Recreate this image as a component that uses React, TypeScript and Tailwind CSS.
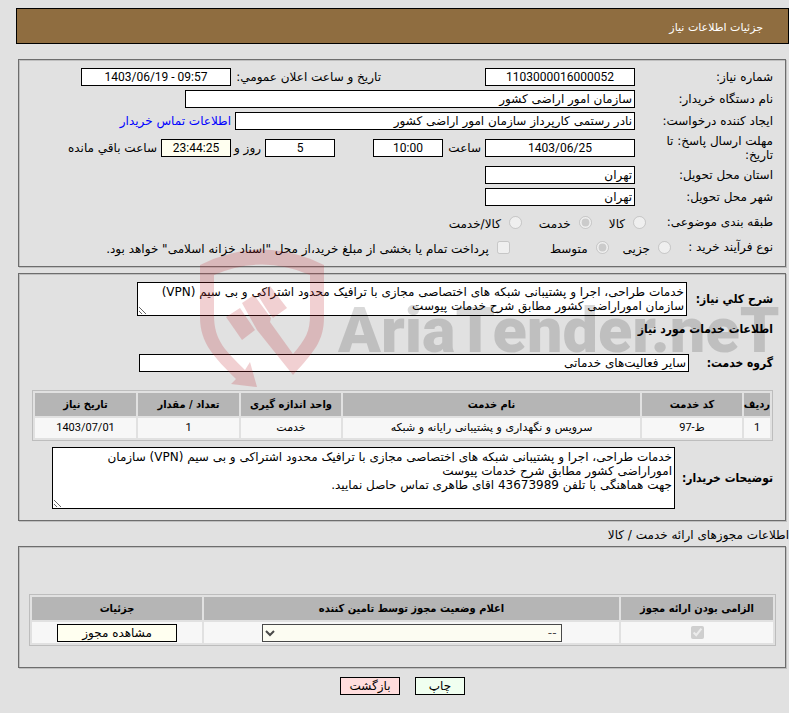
import type { ReactNode } from "react";
import clsx from "clsx";

const description =
  "خدمات طراحی، اجرا و پشتیبانی شبکه های اختصاصی مجازی با ترافیک محدود اشتراکی و بی سیم (VPN) سازمان اموراراضی کشور مطابق شرح خدمات پیوست";

const buyerNotes = `${description}\nجهت هماهنگی با تلفن 43673989 اقای طاهری تماس حاصل نمایید.`;

const services = [
  {
    row: "1",
    code: "ط-97",
    name: "سرویس و نگهداری و پشتیبانی رایانه و شبکه",
    unit: "خدمت",
    amount: "1",
    date: "1403/07/01",
  },
];

const bold = "font-['DejaVu_Sans_Condensed','DejaVu_Sans',sans-serif] font-bold";
const numeric = "font-[Roboto,'DejaVu_Sans',sans-serif] text-center";
const cell = "bg-[#f7f7f7] p-0 text-center";
const head = clsx("h-[23px] bg-[#b5b5b5] p-0 text-center", bold);
const label = "w-[138px] shrink-0";

function Panel({ className, children }: { className?: string; children: ReactNode }) {
  return (
    <section
      className={clsx(
        "ml-0.5 mr-[3px] border border-[#6d6d6d] shadow-[1px_1px_0_#bfbfbf,inset_1px_1px_0_#bfbfbf]",
        className
      )}
    >
      {children}
    </section>
  );
}

function Field({ id, value, className }: { id: string; value: string; className: string }) {
  return (
    <input
      id={id}
      type="text"
      readOnly
      defaultValue={value}
      className={clsx("h-[18px] shrink-0 border border-black px-0.5 leading-4", className)}
    />
  );
}

function Option({ name, label, checked }: { name: string; label: string; checked?: boolean }) {
  return (
    <label className="flex items-center gap-2">
      <input type="radio" name={name} disabled defaultChecked={checked} className="size-[13px]" />
      <span className="pt-1">{label}</span>
    </label>
  );
}

function Watermark() {
  return (
    <svg
      className="pointer-events-none absolute left-[200px] top-[249px]"
      width="589"
      height="140"
      viewBox="0 0 589 140"
      direction="ltr"
      aria-hidden="true"
    >
      <g fill="#be2832" fillOpacity="0.22">
        <path d="M0 16Q62 -15 124 16V68C124 92 114 103 93 126L57 81L42 54L54 46L71 69L70 73L93 105C106 90 110 82 110 66V26Q62 5 14 26V66C14 92 26 102 45 121L50 113L57 138L31 135L36 130C14 108 0 94 0 68Z" />
        <path d="M26 68L40 59L55 81L42 91Z" />
        <path d="M57 45L70 37L87 59L73 69L69 64Z" />
      </g>
      <text
        x="138"
        y="103"
        fontSize="63"
        fontWeight="900"
        fill="#000000"
        fillOpacity="0.15"
        className="font-[Roboto,sans-serif]"
      >
        AriaTender.neT
      </text>
    </svg>
  );
}

export default function App() {
  return (
    <div
      dir="rtl"
      className="relative min-h-screen bg-[#e1e1e1] pb-4 pl-4 pt-2 font-['DejaVu_Sans',sans-serif] text-[12px] leading-[14px] text-black"
    >
      <header className="flex h-9 items-center border border-black bg-[#8f6d40] pr-[25px] pt-1 text-[11px] text-white">
        <h1>جزئیات اطلاعات نیاز</h1>
      </header>

      <Panel className="mt-[15px] pb-2 pl-[13px] pr-3 pt-1.5">
        <div className="flex h-[22px] items-center">
          <label htmlFor="need-no" className={label}>شماره نیاز:</label>
          <Field id="need-no" value="1103000016000052" className={clsx("w-[150px] bg-white", numeric)} />
          <label htmlFor="announce" className="mr-[104px] w-[150px] shrink-0">تاريخ و ساعت اعلان عمومي:</label>
          <Field id="announce" value="1403/06/19 - 09:57" className={clsx("w-[150px] bg-white [direction:ltr]", numeric)} />
        </div>
        <div className="flex h-[22px] items-center">
          <label htmlFor="org" className={label}>نام دستگاه خریدار:</label>
          <Field id="org" value="سازمان امور اراضی کشور" className="w-[450px] bg-white" />
        </div>
        <div className="flex h-[22px] items-center">
          <label htmlFor="creator" className={label}>ایجاد کننده درخواست:</label>
          <Field id="creator" value="نادر رستمی کارپرداز سازمان امور اراضی کشور" className="w-[400px] bg-white" />
          <a href="#contact" className="mr-1 text-[#0000ff]">اطلاعات تماس خریدار</a>
        </div>
        <div className="flex h-8 items-center">
          <label htmlFor="deadline" className={clsx(label, "pl-5")}>مهلت ارسال پاسخ: تا تاریخ:</label>
          <Field id="deadline" value="1403/06/25" className={clsx("w-[150px] bg-white", numeric)} />
          <label htmlFor="hour" className="w-[42px] shrink-0 pr-1">ساعت</label>
          <Field id="hour" value="10:00" className={clsx("w-[70px] bg-white", numeric)} />
          <Field id="days" value="5" className={clsx("mr-[38px] w-[70px] bg-white", numeric)} />
          <label htmlFor="days" className="w-[34px] shrink-0 whitespace-nowrap pr-1">روز و</label>
          <Field id="left" value="23:44:25" className={clsx("w-[70px] bg-[#fffff0]", numeric)} />
          <label htmlFor="left" className="shrink-0 pr-1">ساعت باقي مانده</label>
        </div>
        <div className="flex h-[22px] items-center">
          <label htmlFor="province" className={label}>استان محل تحویل:</label>
          <Field id="province" value="تهران" className="w-[150px] bg-white" />
        </div>
        <div className="flex h-[22px] items-center">
          <label htmlFor="city" className={label}>شهر محل تحویل:</label>
          <Field id="city" value="تهران" className="w-[150px] bg-white" />
        </div>
        <div className="flex h-7 items-center" role="radiogroup" aria-label="طبقه بندی موضوعی">
          <span className="w-[127px] shrink-0">طبقه بندی موضوعی:</span>
          <div className="flex gap-[17px]">
            <Option name="subject" label="کالا" />
            <Option name="subject" label="خدمت" checked />
            <Option name="subject" label="کالا/خدمت" />
          </div>
        </div>
        <div className="flex h-[22px] items-center">
          <span className="w-[102px] shrink-0">نوع فرآیند خرید :</span>
          <div className="flex shrink-0 gap-[14px]" role="radiogroup" aria-label="نوع فرآیند خرید">
            <Option name="process" label="جزیی" />
            <Option name="process" label="متوسط" checked />
          </div>
          <label className="mr-10 flex shrink-0 items-center gap-2">
            <input type="checkbox" disabled className="size-[13px]" />
            <span className="pt-1">پرداخت تمام یا بخشی از مبلغ خرید،از محل "اسناد خزانه اسلامی" خواهد بود.</span>
          </label>
        </div>
      </Panel>

      <Panel className="mt-1.5 pb-[11px] pl-[13px] pr-3 pt-2">
        <div className="flex items-center">
          <label htmlFor="summary" className={clsx("w-[86px] shrink-0", bold)}>شرح کلي نیاز:</label>
          <textarea
            id="summary"
            readOnly
            defaultValue={description}
            className="h-[34px] w-[550px] border border-black bg-white px-0.5 py-0.5"
          />
        </div>
        <h2 className={clsx("mt-1.5", bold)}>اطلاعات خدمات مورد نیاز</h2>
        <div className="mt-[18px] flex items-center">
          <label htmlFor="group" className={clsx("w-[84px] shrink-0", bold)}>گروه خدمت:</label>
          <Field id="group" value="سایر فعالیت‌های خدماتی" className="w-[550px] bg-white" />
        </div>
        <table className="mt-[18px] w-full table-fixed border-separate border-spacing-0.5 border border-[#bdbdbd] text-[11px]">
          <colgroup>
            <col className="w-[26px]" />
            <col className="w-[100px]" />
            <col />
            <col className="w-[100px]" />
            <col className="w-[101px]" />
            <col className="w-[101px]" />
          </colgroup>
          <thead>
            <tr>
              <th className={clsx(head, "whitespace-nowrap")}>ردیف</th>
              <th className={head}>کد خدمت</th>
              <th className={head}>نام خدمت</th>
              <th className={head}>واحد اندازه گیری</th>
              <th className={head}>تعداد / مقدار</th>
              <th className={head}>تاریخ نیاز</th>
            </tr>
          </thead>
          <tbody>
            {services.map((s) => (
              <tr key={s.row}>
                <td className={clsx(cell, numeric, "h-5")}>{s.row}</td>
                <td className={clsx(cell, numeric)}>{s.code}</td>
                <td className={cell}>{s.name}</td>
                <td className={cell}>{s.unit}</td>
                <td className={clsx(cell, numeric)}>{s.amount}</td>
                <td className={clsx(cell, numeric)}>{s.date}</td>
              </tr>
            ))}
          </tbody>
        </table>
        <div className="mt-1.5 flex items-center">
          <label htmlFor="notes" className={clsx("w-[98px] shrink-0 whitespace-nowrap", bold)}>توضیحات خریدار:</label>
          <textarea
            id="notes"
            readOnly
            defaultValue={buyerNotes}
            className="h-[62px] w-[623px] border border-black bg-white px-0.5 py-0.5"
          />
        </div>
      </Panel>

      <h2 className="mt-[7px] pb-1">اطلاعات مجوزهای ارائه خدمت / کالا</h2>

      <Panel className="pb-[21px] pl-2.5 pr-[9px] pt-[47px]">
        <table className="w-full table-fixed border-separate border-spacing-0.5 border border-[#bdbdbd] text-[11px]">
          <colgroup>
            <col className="w-[152px]" />
            <col />
            <col className="w-[170px]" />
          </colgroup>
          <thead>
            <tr>
              <th className={head}>الزامی بودن ارائه مجوز</th>
              <th className={head}>اعلام وضعیت مجوز توسط تامین کننده</th>
              <th className={head}>جزئیات</th>
            </tr>
          </thead>
          <tbody>
            <tr>
              <td className={clsx(cell, "h-[21px]")}>
                <input type="checkbox" disabled defaultChecked aria-label="الزامی بودن ارائه مجوز" className="size-[13px] align-middle" />
              </td>
              <td className={cell}>
                <select
                  disabled
                  aria-label="اعلام وضعیت مجوز توسط تامین کننده"
                  className="h-[18px] w-[300px] border border-black bg-[#fffff0] align-top text-[12px] disabled:opacity-70"
                >
                  <option>--</option>
                </select>
              </td>
              <td className={cell}>
                <button type="button" className="h-[18px] w-[120px] border border-black bg-[#fffff0] align-top text-[12px] leading-4">
                  مشاهده مجوز
                </button>
              </td>
            </tr>
          </tbody>
        </table>
      </Panel>

      <div className="mt-[9px] flex justify-center gap-[15px]">
        <button type="button" className="h-[18px] w-[50px] border border-black bg-[#f0fff0] leading-4">چاپ</button>
        <button type="button" className="h-[18px] w-[60px] border border-black bg-[#ffdddd] leading-4">بازگشت</button>
      </div>

      <Watermark />
    </div>
  );
}
